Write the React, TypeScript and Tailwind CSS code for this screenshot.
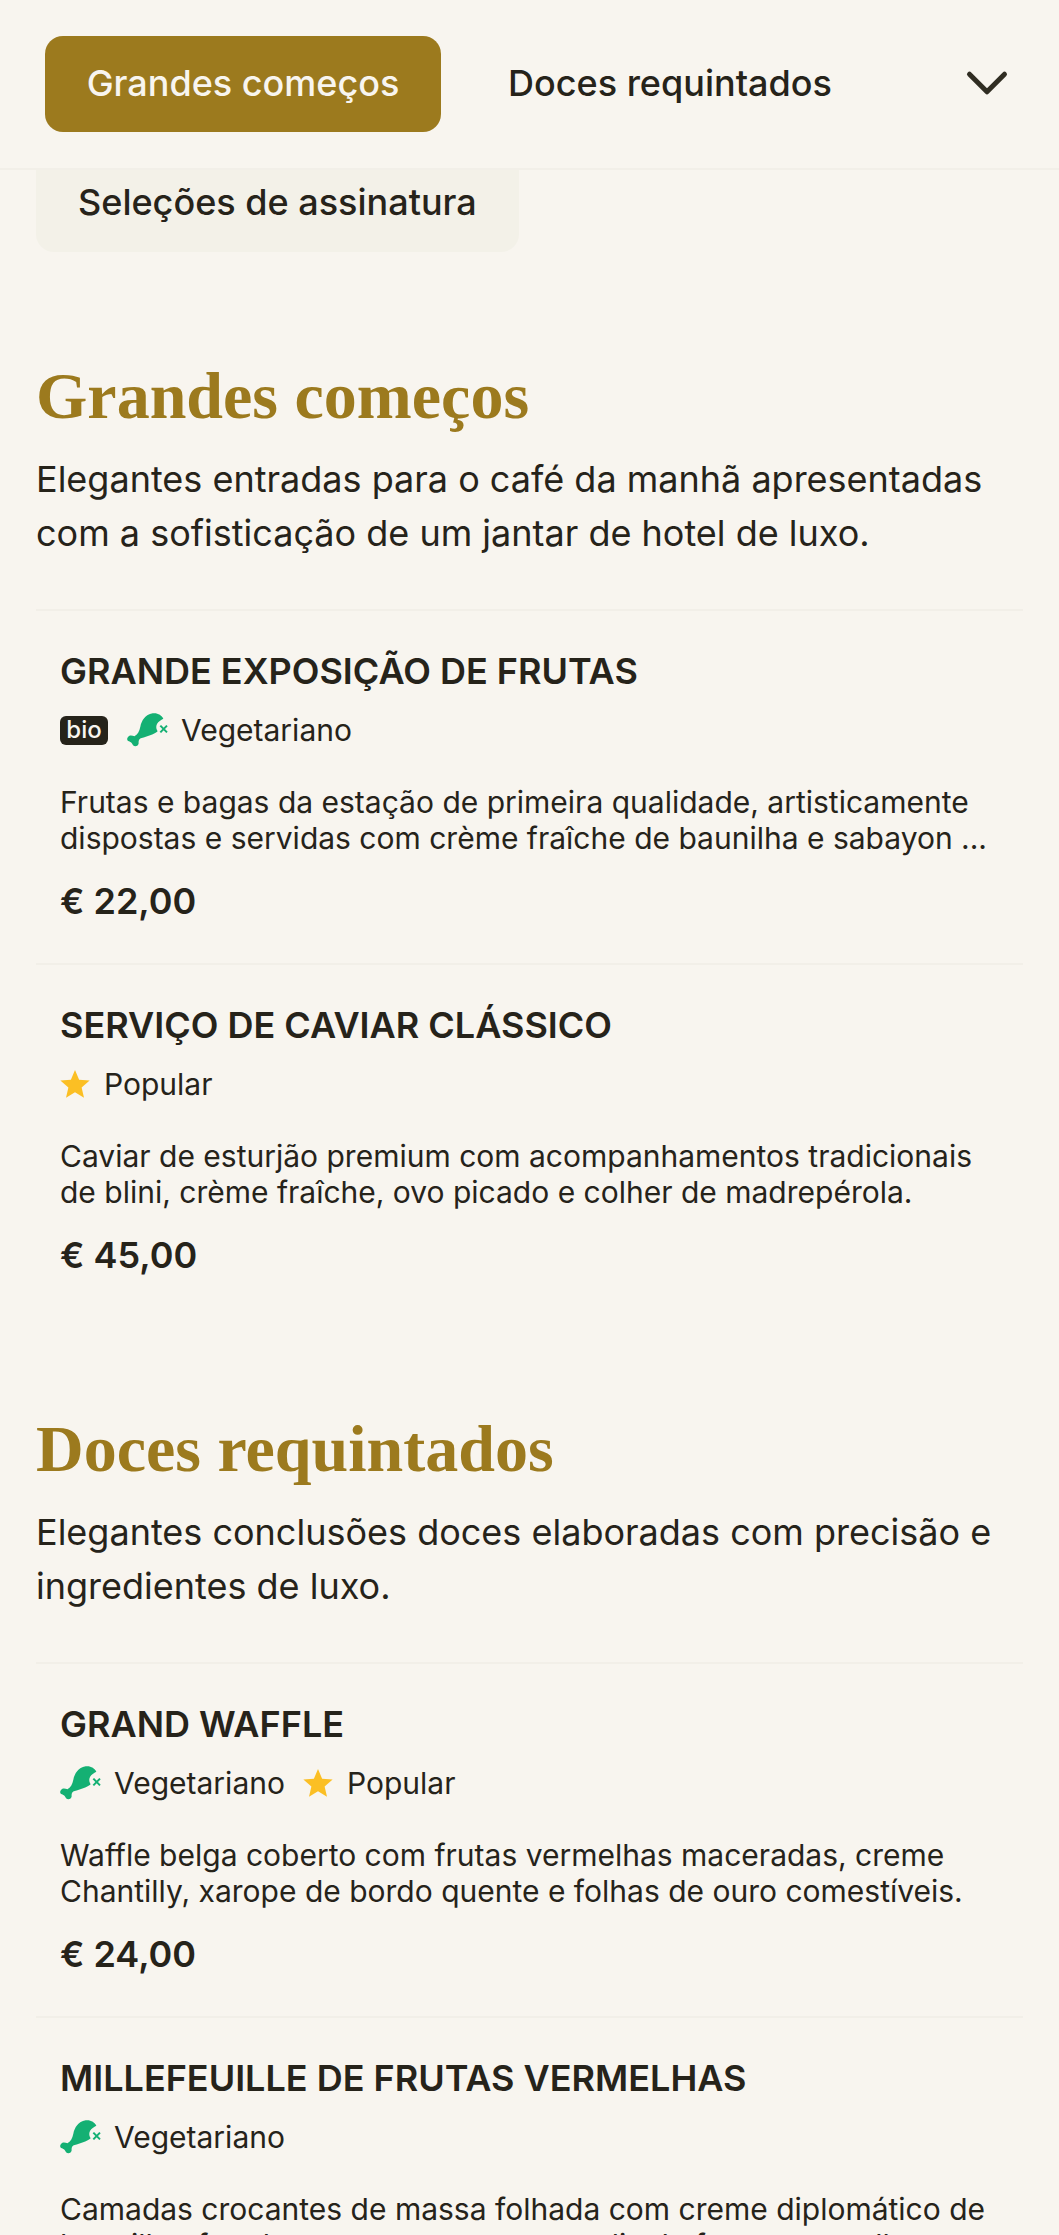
import React from "react";
import { ChevronDown } from "lucide-react";

const Leg = () => (
  <svg viewBox="18 24 123 108" className="w-[41px] h-[36px] shrink-0">
    <path
      fill="#14b073"
      d="M22 98C27 92 35 95 40 97C50 92 55 82 58 68C62 50 72 32 95 28C110 26 122 34 127 44C120 48 112 52 108 60C104 68 106 76 110 82C98 92 78 98 62 102C54 104 52 110 53 118C52 127 42 129 36 124C34 118 30 114 24 112C17 110 17 102 22 98Z"
    />
    <path stroke="#14b073" strokeWidth="6" fill="none" d="M118 65L138 85M138 65L118 85" />
  </svg>
);

const Star = () => (
  <svg viewBox="0 0 24 24" className="w-[30px] h-[30px] shrink-0">
    <path fill="#fbbf24" d="M12 .8l3.3 7.7 8.4.7-6.4 5.5 1.9 8.2L12 18.6l-7.2 4.3 1.9-8.2L.3 9.2l8.4-.7z" />
  </svg>
);

type Tag = "bio" | "veg" | "pop";

const Tags = ({ tags }: { tags: Tag[] }) => (
  <div className="flex items-center h-[36px] text-[30px] leading-[36px]">
    {tags.map((t) => {
      if (t === "bio")
        return (
          <span
            key={t}
            className="mr-[19px] flex items-center justify-center w-[48px] h-[29px] rounded-[6px] bg-[#26231a] text-[#f8f5ef] text-[24px] font-medium leading-none"
          >
            bio
          </span>
        );
      if (t === "veg")
        return (
          <span key={t} className="flex items-center gap-[13px] mr-[18px]">
            <Leg />
            <span>Vegetariano</span>
          </span>
        );
      return (
        <span key={t} className="flex items-center gap-[14px]">
          <Star />
          <span>Popular</span>
        </span>
      );
    })}
  </div>
);

const Item = ({ title, tags, desc, price }: { title: string; tags: Tag[]; desc: string[]; price: string }) => (
  <div className="border-t-2 border-[#f2efe8] px-[24px] h-[354px] pt-[40px]">
    <h3 className="text-[36px] leading-[40px] font-semibold">{title}</h3>
    <div className="mt-[21px]">
      <Tags tags={tags} />
    </div>
    <p className="mt-[36px] text-[30px] leading-[36px]">
      {desc.map((d) => (
        <span key={d} className="block whitespace-nowrap">
          {d}
        </span>
      ))}
    </p>
    <p className="mt-[25px] text-[36px] leading-[40px] font-semibold">{price}</p>
  </div>
);

const Section = ({ title, intro, children }: { title: string; intro: string[]; children: React.ReactNode }) => (
  <section>
    <h2 className="font-['Liberation_Serif',serif] font-bold text-[66px] leading-[72px] text-[#9c7a1e]">{title}</h2>
    <p className="mt-[20px] text-[36px] leading-[54px]">
      {intro.map((d) => (
        <span key={d} className="block whitespace-nowrap">
          {d}
        </span>
      ))}
    </p>
    <div className="mt-[49px]">{children}</div>
  </section>
);

export default function App() {
  return (
    <div className="h-[2235px] overflow-hidden bg-[#f8f5ef] text-[#26231a] font-['Inter',sans-serif]">
      <header className="h-[170px] border-b-2 border-[#f2efe8] flex items-start pt-[36px] pl-[45px]">
        <button className="w-[396px] h-[96px] pb-[2px] rounded-[18px] bg-[#9c7a1e] text-[#f8f5ef] text-[36px] font-medium flex items-center justify-center">
          Grandes começos
        </button>
        <span className="ml-[67px] h-[96px] pb-[2px] flex items-center text-[36px] font-medium">Doces requintados</span>
        <ChevronDown className="ml-auto mr-[37px] mt-[12px] w-[70px] h-[70px] text-[#302d22]" strokeWidth={1.7} />
      </header>
      <main className="px-[36px]">
        <div className="w-[483px] h-[82px] rounded-b-[18px] bg-[#f3f1e8] pt-[8px] pl-[42px] text-[36px] leading-[48px] font-medium">
          Seleções de assinatura
        </div>
        <div className="mt-[108px] flex flex-col gap-[96px] w-[987px]">
          <Section
            title="Grandes começos"
            intro={["Elegantes entradas para o café da manhã apresentadas", "com a sofisticação de um jantar de hotel de luxo."]}
          >
            <Item
              title="GRANDE EXPOSIÇÃO DE FRUTAS"
              tags={["bio", "veg"]}
              desc={[
                "Frutas e bagas da estação de primeira qualidade, artisticamente",
                "dispostas e servidas com crème fraîche de baunilha e sabayon ...",
              ]}
              price="€ 22,00"
            />
            <Item
              title="SERVIÇO DE CAVIAR CLÁSSICO"
              tags={["pop"]}
              desc={[
                "Caviar de esturjão premium com acompanhamentos tradicionais",
                "de blini, crème fraîche, ovo picado e colher de madrepérola.",
              ]}
              price="€ 45,00"
            />
          </Section>
          <Section
            title="Doces requintados"
            intro={["Elegantes conclusões doces elaboradas com precisão e", "ingredientes de luxo."]}
          >
            <Item
              title="GRAND WAFFLE"
              tags={["veg", "pop"]}
              desc={[
                "Waffle belga coberto com frutas vermelhas maceradas, creme",
                "Chantilly, xarope de bordo quente e folhas de ouro comestíveis.",
              ]}
              price="€ 24,00"
            />
            <Item
              title="MILLEFEUILLE DE FRUTAS VERMELHAS"
              tags={["veg"]}
              desc={[
                "Camadas crocantes de massa folhada com creme diplomático de",
                "baunilha, framboesas, morangos e coulis de frutas vermelhas.",
              ]}
              price="€ 28,00"
            />
          </Section>
        </div>
      </main>
    </div>
  );
}
